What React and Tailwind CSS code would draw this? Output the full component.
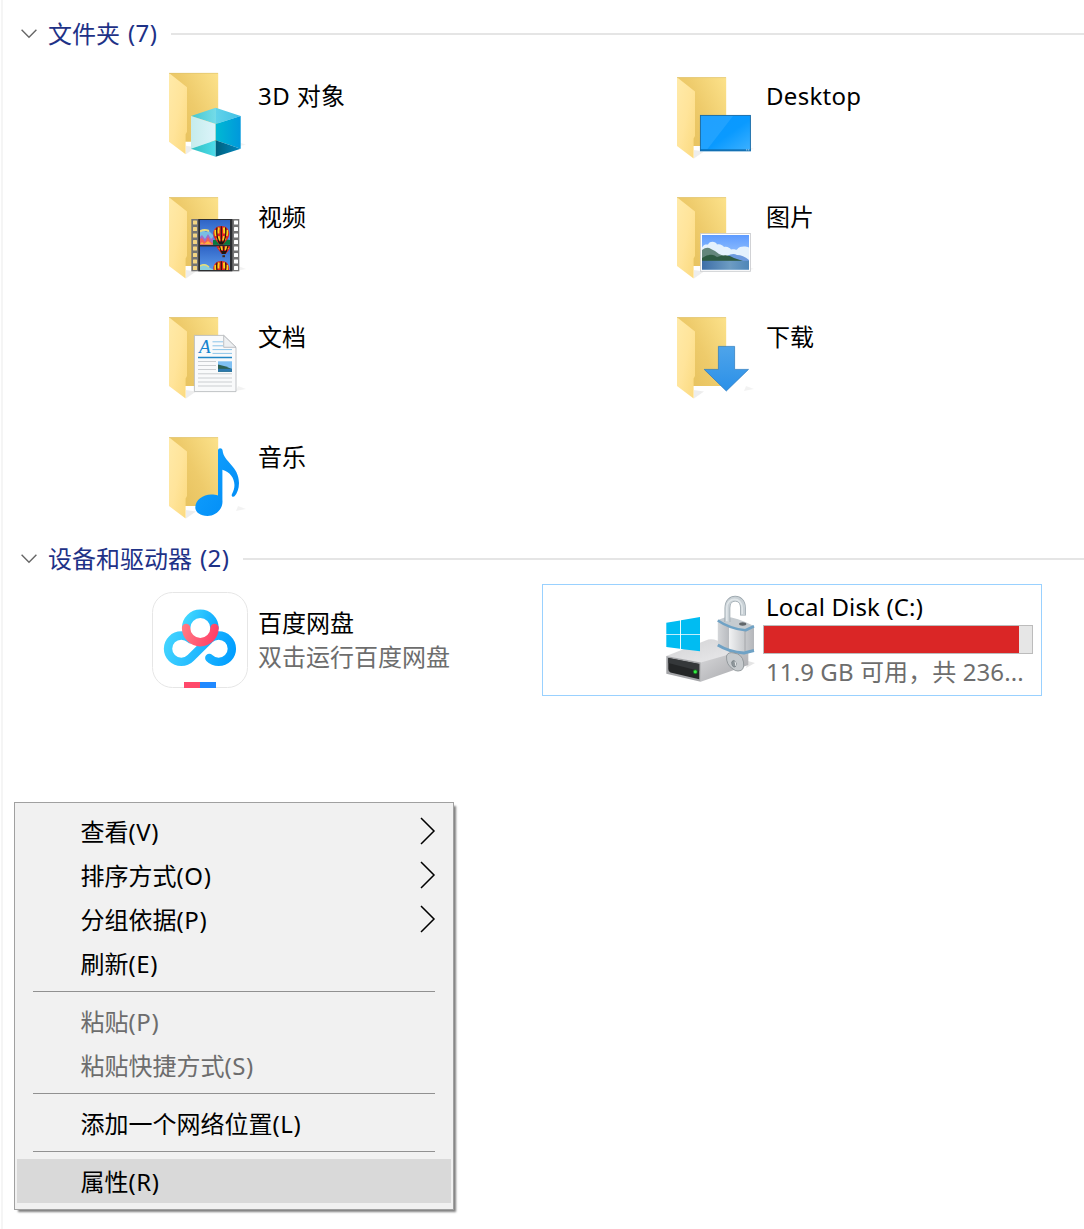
import React from "react";

function FolderBase({ dy = 0 }) {
  return (
    <g transform={`translate(0 ${dy})`}>
      <path d="M34 91.5L34 83L44 84.5Z" fill="#000" opacity=".07" />
      <path d="M84 84L94 82L86 79Z" fill="#000" opacity=".05" />
      <path d="M17 10.3H66.2V79H33Z" fill="url(#folderBack)" />
      <path d="M17 10.3L35 24.6V69L33.6 71.5V91.6L17 79Z" fill="url(#folderFront)" />
      <path d="M17 10.6H66" stroke="#dcbf6c" strokeWidth=".6" />
    </g>
  );
}

function Defs() {
  return (
    <svg className="absolute h-0 w-0" aria-hidden="true">
      <defs>
        <linearGradient id="folderBack" x1="0" y1=".7" x2="1" y2="0">
          <stop offset="0" stopColor="#e6c15d" />
          <stop offset=".45" stopColor="#eecb6b" />
          <stop offset="1" stopColor="#fce28b" />
        </linearGradient>
        <linearGradient id="folderFront" x1="0" y1="0" x2="1" y2="1">
          <stop offset="0" stopColor="#ffeaa9" />
          <stop offset=".5" stopColor="#ffe49a" />
          <stop offset="1" stopColor="#fbd97d" />
        </linearGradient>
        <linearGradient id="cubeTop"><stop offset="0" stopColor="#45c8cf" /><stop offset=".5" stopColor="#74dbe8" /><stop offset=".51" stopColor="#60d2ea" /><stop offset="1" stopColor="#41c0e4" /></linearGradient>
        <linearGradient id="cubeLeft"><stop offset="0" stopColor="#c5ecec" /><stop offset="1" stopColor="#dcf4fa" /></linearGradient>
        <linearGradient id="cubeRight"><stop offset="0" stopColor="#00b9d3" /><stop offset="1" stopColor="#0098dc" /></linearGradient>
        <linearGradient id="cubeFloorL"><stop offset="0" stopColor="#2fc0c0" /><stop offset="1" stopColor="#4ddbea" /></linearGradient>
        <linearGradient id="cubeFloorR"><stop offset="0" stopColor="#005f7c" /><stop offset="1" stopColor="#0089c2" /></linearGradient>
        <linearGradient id="sky" x1="0" y1="0" x2="0" y2="1"><stop offset="0" stopColor="#2f64c6" /><stop offset="1" stopColor="#5b9aea" /></linearGradient>
        <linearGradient id="photoSky" x1="0" y1="0" x2="0" y2="1"><stop offset="0" stopColor="#5e9bff" /><stop offset="1" stopColor="#b9dcfb" /></linearGradient>
        <linearGradient id="photoSea"><stop offset="0" stopColor="#3d6ea8" /><stop offset=".6" stopColor="#6d9cc2" /><stop offset="1" stopColor="#4e86b8" /></linearGradient>
        <linearGradient id="screen" x1="0" y1="0" x2="1" y2="1"><stop offset="0" stopColor="#0a97ff" /><stop offset=".55" stopColor="#0a9aff" /><stop offset="1" stopColor="#3eb1ff" /></linearGradient>
        <linearGradient id="arrow" x1="0" y1="0" x2="0" y2="1"><stop offset="0" stopColor="#4ea4ea" /><stop offset="1" stopColor="#2b90e8" /></linearGradient>
        <linearGradient id="note" x1="0" y1="0" x2="1" y2="1"><stop offset="0" stopColor="#14a3ff" /><stop offset="1" stopColor="#008bf5" /></linearGradient>
        <linearGradient id="cloudBlue" gradientUnits="userSpaceOnUse" x1="12" y1="40" x2="84" y2="60"><stop offset="0" stopColor="#45d6ff" /><stop offset="1" stopColor="#009dff" /></linearGradient>
        <linearGradient id="ringBlue" gradientUnits="userSpaceOnUse" x1="30" y1="25" x2="66" y2="38"><stop offset="0" stopColor="#45dcff" /><stop offset="1" stopColor="#0ba6ff" /></linearGradient>
        <linearGradient id="ringRed" gradientUnits="userSpaceOnUse" x1="30" y1="36" x2="64" y2="46"><stop offset="0" stopColor="#ff7b84" /><stop offset="1" stopColor="#ff3f67" /></linearGradient>
        <linearGradient id="driveTop" x1="0" y1="0" x2="1" y2="1"><stop offset="0" stopColor="#d2d2d4" /><stop offset="1" stopColor="#ececee" /></linearGradient>
        <linearGradient id="driveSide" x1="0" y1="0" x2="1" y2="1"><stop offset="0" stopColor="#dadadc" /><stop offset="1" stopColor="#a3a4a8" /></linearGradient>
        <linearGradient id="lockBody"><stop offset="0" stopColor="#d4d6d9" /><stop offset=".3" stopColor="#b9bcc0" /><stop offset=".32" stopColor="#f0f1f2" /><stop offset=".7" stopColor="#cbcdd0" /><stop offset="1" stopColor="#b4b6ba" /></linearGradient>
      </defs>
    </svg>
  );
}

function Icon({ children }) {
  return <svg viewBox="0 0 96 96" className="h-24 w-24 shrink-0">{children}</svg>;
}

function CubeIcon() {
  return (
    <Icon>
      <FolderBase dy={-4.3} />
      <path d="M39 49L63.7 40.7 88.7 49 63.7 57Z" fill="url(#cubeTop)" />
      <path d="M39 49L63.7 57V73.3L39 81.7Z" fill="url(#cubeLeft)" />
      <path d="M88.7 49L63.7 57V73.3L88.7 81.7Z" fill="url(#cubeRight)" />
      <path d="M39 81.7L63.7 73.3V89.7Z" fill="url(#cubeFloorL)" />
      <path d="M88.7 81.7L63.7 73.3V89.7Z" fill="url(#cubeFloorR)" />
    </Icon>
  );
}

function Balloon({ x, y }) {
  return (
    <g transform={`translate(${x} ${y})`}>
      <path d="M0 -8.5C5 -8.5 8 -5 8 -1C8 4 4 7 2 10H-2C-4 7 -8 4 -8 -1C-8 -5 -5 -8.5 0 -8.5Z" fill="#e2231f" />
      <path d="M-5.8 -4.500Q-6.500 1 -3.500 5M-2.600 -7Q-3.500 0 -1.800 6M2.600 -7Q3.500 0 1.800 6M5.800 -4.500Q6.500 1 3.500 5" stroke="#ffd21c" strokeWidth="2" strokeDasharray="6 2.500" fill="none" />
      <path d="M-4.300 -7Q-5.500 0 -2.300 8M0 -8.300V9M4.300 -7Q5.500 0 2.300 8" stroke="#1c1512" strokeWidth="1.100" fill="none" />
      <path d="M-3 7H3L1.800 10H-1.800Z" fill="#1c1512" />
      <rect x="-1.300" y="11.200" width="2.600" height="2" fill="#4a2612" />
    </g>
  );
}

function VideoIcon() {
  const holes = [33.6, 40.1, 46.6, 53.1, 59.6, 66.1, 72.6, 79.1];
  return (
    <Icon>
      <FolderBase />
      <rect x="39.3" y="32" width="48" height="52.3" fill="#747474" />
      <rect x="46.3" y="32" width="34" height="52.3" fill="#2b2d30" />
      {holes.map((y) => (
        <g key={y}>
          <rect x="41" y={y} width="4" height="4" rx=".5" fill="#f3d583" />
          <rect x="82" y={y} width="4" height="4" rx=".5" fill="#fff" />
        </g>
      ))}
      <clipPath id="clipA"><rect x="48" y="33" width="30" height="24.7" /></clipPath>
      <g clipPath="url(#clipA)">
        <rect x="48" y="33" width="30" height="24.7" fill="url(#sky)" />
        <path d="M60 53.500q8 -2.500 18 -.5v5H60z" fill="#08793d" />
        <path d="M48 45q3 -3 6 0l3 -1 4 4V58H48z" fill="#78bfe4" />
        <path d="M48 44.500q4 -2.500 9 -.5" stroke="#e6dc80" strokeWidth="2" fill="none" />
        <path d="M48 50l2 -2 3 4 3 -5 3 5 2 -2V58H48z" fill="#a06cc8" />
        <path d="M48 52l2 -1 3 4 3 -5 3 5 2 1V58H48z" fill="#f0605a" />
        <path d="M48 57l2 -2 2 2 4 -3 4 3.500z" fill="#ffb03a" />
        <Balloon x={69.3} y={47.5} />
      </g>
      <clipPath id="clipB"><rect x="48" y="59.3" width="30" height="23.7" /></clipPath>
      <g clipPath="url(#clipB)">
        <rect x="48" y="59.3" width="30" height="23.7" fill="url(#sky)" />
        <path d="M48 79q5 -4 8 0t6 3v3H48z" fill="#8bd0dc" />
        <path d="M48 79q5 -3 9 1" stroke="#e8dc74" strokeWidth="1.6" fill="none" />
        <Balloon x={71.7} y={57} />
        <Balloon x={69.3} y={82.5} />
      </g>
    </Icon>
  );
}

function DocIcon() {
  return (
    <Icon>
      <FolderBase />
      <path d="M42.4 28.4H71.7L84 40.3V84.6H42.4Z" fill="#f9fafb" stroke="#b9bcbf" strokeWidth=".9" />
      <path d="M71.7 28.4V40.3H84Z" fill="#eef0f2" stroke="#b0b3b6" strokeWidth=".8" />
      <text x="47" y="46.3" fontSize="19" fill="#1584cf" className="font-['Liberation_Serif'] italic">A</text>
      <path d="M60.5 34.8H71M60.5 38.8H71M60.5 42.6H80M60.5 46.4H80" stroke="#8cc4e8" strokeWidth="1" />
      <path d="M46 50.5H80" stroke="#2287c6" strokeWidth="1.3" />
      <path d="M46 54.5H64M46 58.5H64M46 62.5H64M46 66.8H80M46 71H80M46 75H80M46 79H80" stroke="#cbced1" strokeWidth="1" />
      <rect x="66" y="54.3" width="14" height="10.4" fill="#7fc0f3" />
      <path d="M66 57.5q7 1 14 4.500V64.7H66z" fill="#2d6153" />
      <path d="M66 61.800H80V64.700H66z" fill="#2b78ae" />
    </Icon>
  );
}

function MusicIcon() {
  return (
    <Icon>
      <FolderBase />
      <path d="M66 68.500V23.500C66 20.600 70.300 20.600 70.600 23.500C71.500 35 87 39 87 56C87 62 85 66.500 82.500 69.300C81 70.500 79 69 79.900 67.300C86 56.500 80.500 45.500 70.400 42.700V73C71.500 82 63.500 89 55.500 89C48 89 43.300 85 43.300 80.500C43.300 73 51 67.500 59 67.500C62 67.500 64 67.800 66 68.500Z" fill="url(#note)" />
    </Icon>
  );
}

function DesktopIcon() {
  return (
    <Icon>
      <FolderBase />
      <rect x="40.400" y="48.400" width="50" height="35.400" fill="url(#screen)" stroke="#1668a4" strokeWidth=".9" />
      <path d="M41 49H73L47.500 82H41Z" fill="#fff" opacity=".09" />
      <rect x="40" y="82.400" width="50.800" height="1.300" fill="#0b69ad" />
      <path d="M86 82.900H87.300M88 82.900H89.300" stroke="#d7ecfb" strokeWidth=".8" />
      <path d="M40 84.500H91" stroke="#9fc8e6" strokeWidth=".7" />
    </Icon>
  );
}

function PictureIcon() {
  return (
    <Icon>
      <FolderBase />
      <rect x="40.600" y="46.500" width="49.800" height="37.800" fill="#fff" stroke="#c9cbce" strokeWidth=".9" />
      <rect x="42" y="48" width="47" height="34.700" fill="url(#photoSky)" />
      <path d="M42 60.500c2 -4 5 -3 6 -3c2 -4 8 -3 9 0c3 -1 6 1 7 2.500c3 -1 6 1 7 2.500c4 -1 5 1 6 0c3 -4 9 -3 12 -2V76H42z" fill="#e4f1fd" />
      <path d="M64 71q8 -6 13 -3q6 0 12 5v2H62z" fill="#6d9ade" />
      <path d="M42 63q5 -4 9 -1q5 2 8 5q7 2 10 7H42z" fill="#63867c" />
      <path d="M42 71q9 -6 15 -1q10 -4 17 1q6 2 9 3H42z" fill="#2d5a42" />
      <rect x="42" y="73.800" width="47" height="8.900" fill="url(#photoSea)" />
    </Icon>
  );
}

function DownloadIcon() {
  return (
    <Icon>
      <FolderBase />
      <path d="M58.400 39.400H74.600V62.400H88.500L66.300 84L44.200 62.400H58.400Z" fill="url(#arrow)" stroke="#2a78bd" strokeWidth=".7" />
    </Icon>
  );
}

function BaiduIcon() {
  return (
    <Icon>
      <rect x=".5" y=".5" width="95" height="95" rx="20" fill="#fff" stroke="#e6e6e6" />
      <g fill="none" strokeWidth="8.400" strokeLinecap="round">
        <path d="M57.300 47.400L38.600 66A13.200 13.200 0 1 1 38.600 47.400M57.300 47.400A13.200 13.200 0 1 1 57.300 66" stroke="url(#cloudBlue)" />
        <path d="M34.100 36A14.200 14.200 0 0 1 62.500 36" stroke="url(#ringBlue)" />
        <path d="M34.100 36A14.200 14.200 0 0 0 62.500 36" stroke="url(#ringRed)" />
      </g>
      <rect x="32" y="90" width="16" height="6" fill="#ff486b" />
      <rect x="48" y="90" width="16" height="6" fill="#2089ff" />
    </Icon>
  );
}

function DriveIcon() {
  return (
    <Icon>
      <path d="M86 76L95 71L88 69Z" fill="#000" opacity=".1" />
      <path d="M6.300 64L48.300 47.500Q51 46.800 54 47.500L88.300 58.500L40.700 71Z" fill="url(#driveTop)" />
      <path d="M40.700 70.500L88.300 57V73L40.700 89.700Z" fill="url(#driveSide)" />
      <path d="M6.300 64L40.700 70.500V89.700L6.300 81.700Z" fill="#a4a5a8" />
      <path d="M8.300 66L39.200 72V87.200L10.500 80.500Q8.300 80 8.300 77Z" fill="#242627" />
      <path d="M8.300 66L39.200 72V79L8.300 71Z" fill="#35383a" />
      <circle cx="35.300" cy="79.800" r="2.400" fill="#1a7a20" />
      <circle cx="35.300" cy="79.800" r="1.500" fill="#35ee43" />
      <path d="M6.300 30.700L20.100 28.400V42.200H6.300ZM21 28.200L40 25V42.200H21ZM6.300 43.100H20.100V56.800L6.300 55ZM21 43.100H40V59.300L21 56.900Z" fill="#00bcf2" />
      <path d="M57.800 28L66 25Q76 25 94 34L86 38Q70 36 57.800 28Z" fill="#c5cbd0" />
      <path d="M57.800 28V53Q69 60.500 84 61.500L94 58.500V34L86 38Q70 36 57.800 28Z" fill="url(#lockBody)" />
      <path d="M57.800 28.500Q70 36.800 85.500 38.300L94 34.300" fill="none" stroke="#6fa2c5" strokeWidth="2.600" />
      <path d="M57.800 53Q69 60 84 61L94 58.500" fill="none" stroke="#6fa2c5" strokeWidth="3" />
      <path d="M85 39V59" stroke="#9c9ea2" strokeWidth=".8" />
      <ellipse cx="82.700" cy="32" rx="3.600" ry="1.700" fill="#60666b" />
      <path d="M67.400 30V16C67.400 3.500 83 3.500 83 16V23.500" fill="none" stroke="#9aa5ac" strokeWidth="5.800" />
      <path d="M67.400 30V16C67.400 3.500 83 3.500 83 16V23" fill="none" stroke="#c9d1d6" strokeWidth="4.400" />
      <path d="M66.800 29V16C66.800 4.500 82 4.500 82.200 16V22" fill="none" stroke="#e1e7ea" strokeWidth="1.600" />
      <path d="M66.500 64Q68 59.500 74 61Q82 62 83.500 70Q85 79 78 79Q75 79 73 77Q66 73 66.500 64Z" fill="#c6cacd" stroke="#8e9599" strokeWidth=".9" />
      <ellipse cx="74" cy="71.800" rx="2.200" ry="3.300" fill="#8f979b" stroke="#6e777b" strokeWidth=".6" transform="rotate(-15 74 71.800)" />
      <path d="M75 69.500L76 74" stroke="#eef0f1" strokeWidth="1" />
    </Icon>
  );
}

function SectionHeader({ label, count }) {
  return (
    <div className="flex h-10 items-center pl-[21px]">
      <svg viewBox="0 0 16 10" className="mr-[11px] h-2.5 w-4 shrink-0"><path d="M.6 .800L8 8.200L15.400 .800" fill="none" stroke="#666" strokeWidth="1.400" /></svg>
      <h2 className="flex text-2xl leading-8 text-[#1e3287]">
        {label}
        <span className="-mt-px ml-2 tracking-[0.4px]">({count})</span>
      </h2>
      <div className="ml-3.5 h-0.5 flex-1 bg-[#e5e5e5]" />
    </div>
  );
}

function Folder({ icon, name, className = "mt-3.5" }) {
  return (
    <div className="flex h-28 pl-[118px] pt-2">
      {icon}
      <div className={`ml-2.5 whitespace-pre text-2xl leading-8 text-black ${className}`}>{name}</div>
    </div>
  );
}

function MenuItem({ label, hotkey, arrow, disabled, active }) {
  return (
    <div className={`flex h-11 items-center justify-between pl-[63.5px] pr-[15px] text-2xl whitespace-pre ${disabled ? "text-[#6d6d6d]" : "text-black"} ${active ? "bg-[#d9d9d9]" : ""}`}>
      <span className="pt-px">{label}<span className="tracking-[0.6px]">({hotkey})</span></span>
      {arrow && <svg viewBox="0 0 16 28" className="h-7 w-4"><path d="M1 1L14 14L1 27" fill="none" stroke="#000" strokeWidth="1.500" /></svg>}
    </div>
  );
}

function Separator() {
  return <div className="mx-4 mb-[7px] mt-1.5 h-px bg-[#919191]" />;
}

export default function App() {
  return (
    <div lang="zh-CN" className="relative h-[1229px] w-[1084px] overflow-hidden bg-white pt-3.5 font-['Noto_Sans','Noto_Sans_CJK_SC',sans-serif]">
      <Defs />
      <div className="absolute left-px top-0 h-full w-0.5 bg-[#f5f5f5]" />

      <SectionHeader label="文件夹" count={7} />
      <div className="mb-2 ml-[34px] mt-[5px] grid w-[1008px] grid-cols-2 gap-2">
        <Folder icon={<CubeIcon />} name="3D 对象" className="mt-[13px] tracking-[0.4px]" />
        <Folder icon={<DesktopIcon />} name="Desktop" className="mt-[13px] tracking-[0.3px]" />
        <Folder icon={<VideoIcon />} name="视频" />
        <Folder icon={<PictureIcon />} name="图片" />
        <Folder icon={<DocIcon />} name="文档" />
        <Folder icon={<DownloadIcon />} name="下载" />
        <Folder icon={<MusicIcon />} name="音乐" />
      </div>

      <SectionHeader label="设备和驱动器" count={2} />
      <div className="ml-[34px] mt-[5px] grid w-[1008px] grid-cols-2 gap-2">
        <div className="flex h-28 pl-[118px] pt-2">
          <BaiduIcon />
          <div className="ml-2.5 mt-3.5 text-2xl leading-[34px]">
            <div className="text-black">百度网盘</div>
            <div className="text-[#6d6d6d]">双击运行百度网盘</div>
          </div>
        </div>
        <div className="flex h-28 border border-[#99d1ff] pl-[117px] pt-[7px]">
          <DriveIcon />
          <div className="ml-[7px] w-[270px] whitespace-pre text-2xl">
            <div className="-mt-px ml-[3px] h-[34px] leading-8 tracking-[0.15px] text-black">Local Disk (C:)</div>
            <div className="h-[29px] border border-[#bcbcbc] bg-[#e6e6e6]">
              <div className="h-full w-[255px] bg-[#da2626]" />
            </div>
            <div className="ml-[3px] mt-0.5 leading-8 tracking-[0.1px] text-[#6d6d6d]">11.9 GB 可用，共 236...</div>
          </div>
        </div>
      </div>

      <div className="absolute left-3.5 top-[802px] w-[440px] border border-[#a0a0a0] bg-[#f1f1f1] px-0.5 py-1.5 shadow-[3px_3px_2px_-1px_rgba(0,0,0,0.5)]">
        <MenuItem label="查看" hotkey="V" arrow />
        <MenuItem label="排序方式" hotkey="O" arrow />
        <MenuItem label="分组依据" hotkey="P" arrow />
        <MenuItem label="刷新" hotkey="E" />
        <Separator />
        <MenuItem label="粘贴" hotkey="P" disabled />
        <MenuItem label="粘贴快捷方式" hotkey="S" disabled />
        <Separator />
        <MenuItem label="添加一个网络位置" hotkey="L" />
        <Separator />
        <MenuItem label="属性" hotkey="R" active />
      </div>
    </div>
  );
}
